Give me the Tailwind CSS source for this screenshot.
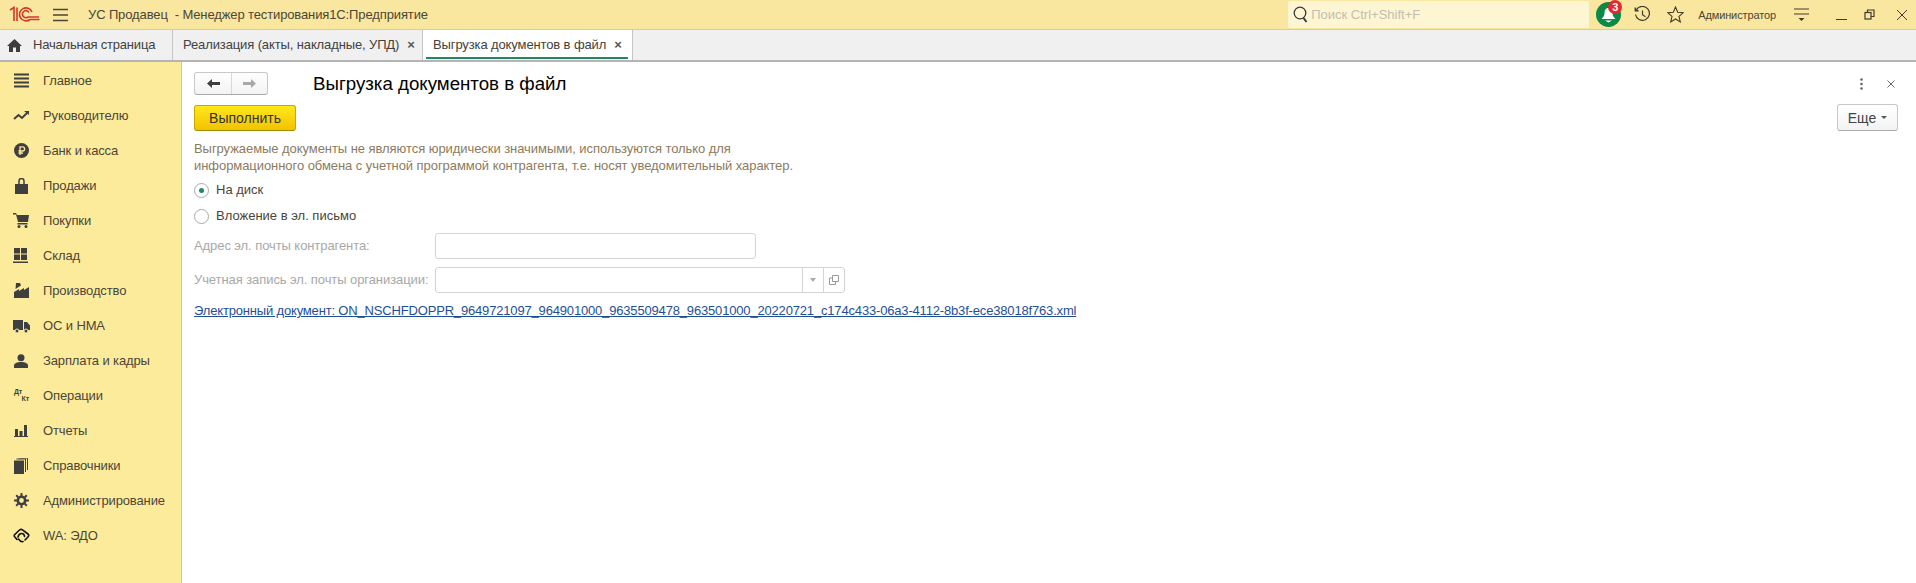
<!DOCTYPE html>
<html lang="ru">
<head>
  <meta charset="UTF-8" />
  <title>Выгрузка документов в файл</title>
  <script src="https://cdn.jsdelivr.net/npm/@tailwindcss/browser@4"></script>
</head>
<body class="h-screen overflow-hidden flex flex-col bg-white text-[13px] leading-[16px] tracking-[-0.12px] text-[#4b4636] font-['Liberation_Sans',Arial,sans-serif]">

  <!-- Title bar -->
  <header class="h-[30px] shrink-0 flex items-center pr-[8px] bg-[#fae79f] border-b border-[#e3cd7c]">
    <svg class="ml-[9px] w-[31px] h-[17px]" viewBox="0 0 31 17" fill="none" stroke="#d2382c" stroke-width="1.600">
      <path d="M1 4l4-2.500V15"/>
      <path d="M8 1.500V15"/>
      <path d="M23 6a6.500 6.500 0 1 0 -2 7.500h9.500"/>
      <path d="M20 6.500a3.500 3.500 0 1 0 -1 4.500h11"/>
    </svg>
    <svg class="ml-[13px] w-[15px] h-[14px]" viewBox="0 0 15 14" stroke="#4b4636" stroke-width="1.300"><path d="M0 1.500h15M0 7h15M0 12.500h15"/></svg>
    <span class="ml-[20px] whitespace-pre text-[13px]">УС Продавец  - Менеджер тестирования1С:Предприятие</span>

    <div class="ml-auto w-[301px] h-[27px] bg-[#fef6d2] rounded-[2px] flex items-center pl-[5px]">
      <svg class="w-[15px] h-[17px]" viewBox="0 0 15 17" fill="none" stroke="#3a3a3a" stroke-width="1.300"><circle cx="7" cy="7" r="5.800"/><path d="M10.500 12l3 4" stroke-width="2"/></svg>
      <span class="ml-[3px] tracking-normal text-[#c2bfae]">Поиск Ctrl+Shift+F</span>
    </div>

    <div class="relative ml-[7px] w-[25px] h-[25px] rounded-full bg-[#0b8a45] flex items-center justify-center">
      <svg class="w-[17px] h-[17px] mt-[1px]" viewBox="0 0 17 17" fill="#fff"><path d="M8.500 1c3 0 4 2.500 4 5 0 3 1.500 4.500 3 6H1.500c1.500-1.500 3-3 3-6 0-2.500 1-5 4-5z"/><path d="M5 13.500h7l-3.500 2z"/></svg>
      <span class="absolute -top-[2px] left-[12px] w-[14px] h-[14px] rounded-full bg-[#e8262c] text-white text-[11px] font-bold leading-[14px] text-center">3</span>
    </div>

    <svg class="ml-[13px] w-[17px] h-[17px]" viewBox="0 0 17 17" fill="none" stroke="#3f3b2c" stroke-width="1.200"><path d="M2.600 3.500A7 7 0 1 1 1.500 8.500"/><path d="M1.200 1.500v3.500h3.500" fill="#3f3b2c"/><path d="M8.500 4.500v4.300l3 2"/></svg>
    <svg class="ml-[16px] w-[17px] h-[17px]" viewBox="0 0 17 17" fill="none" stroke="#3f3b2c" stroke-width="1.100"><path d="M8.500 1l2.200 5.200 5.600.5-4.300 3.700 1.300 5.500-4.800-2.900-4.800 2.900 1.300-5.500L.7 6.700l5.600-.5z"/></svg>
    <span class="ml-[14px] text-[11px]">Администратор</span>
    <svg class="ml-[18px] w-[15px] h-[15px]" viewBox="0 0 15 15" stroke="#3f3b2c" stroke-width="1.100" fill="#3f3b2c"><path d="M0 2h15M0 7h15"/><path d="M4.500 11h6l-3 3z" stroke="none"/></svg>
    <span class="ml-[27px] w-[11px] h-[1px] mt-[9px] bg-[#3f3b2c]"></span>
    <svg class="ml-[17px] w-[11px] h-[11px]" viewBox="0 0 11 11" fill="none" stroke="#3f3b2c" stroke-width="1.200"><rect x="1" y="3.500" width="6" height="6.500"/><path d="M3.500 3.500V1H10v6.500H7"/></svg>
    <svg class="ml-[21px] w-[12px] h-[12px]" viewBox="0 0 12 12" stroke="#3f3b2c"><path d="M1 1l10 10M11 1L1 11"/></svg>
  </header>

  <!-- Tabs -->
  <nav class="h-[32px] shrink-0 flex bg-[#f0f0f0] border-b-2 border-[#b4b4b4] text-[13px] text-[#44423b]">
    <div class="w-[173px] flex items-center border-r border-[#c4c4c4] pl-[7px]">
      <svg class="w-[15px] h-[13px]" viewBox="0 0 15 13" fill="#3d3d3d"><path d="M7.500 0L15 7h-2v6H9V8.500H6V13H2V7H0z"/></svg>
      <span class="ml-[11px] tracking-[-0.2px]">Начальная страница</span>
    </div>
    <div class="w-[250px] flex items-center border-r border-[#c4c4c4] pl-[10px]">
      <span>Реализация (акты, накладные, УПД)</span>
      <span class="ml-[8px] text-[#555] font-bold">×</span>
    </div>
    <div class="relative w-[210px] flex items-center border-r border-[#c4c4c4] pl-[10px] bg-white">
      <span>Выгрузка документов в файл</span>
      <span class="ml-[8px] text-[#555] font-bold">×</span>
      <span class="absolute left-[3px] right-[4px] bottom-[1px] h-[2px] bg-[#1f8a5f]"></span>
    </div>
  </nav>

  <div class="flex-1 flex min-h-0">
    <!-- Section panel -->
    <aside class="w-[182px] shrink-0 bg-[#fdeb9c] border-r border-[#d9c77f] pt-[1px]">
      <a class="h-[35px] flex items-center">
        <svg class="ml-[14px] w-[15px] h-[15px]" viewBox="0 0 15 15" stroke="#3f3f3f" stroke-width="2"><path d="M0 1.500h15M0 5.500h15M0 9.500h15M0 13.500h15"/></svg>
        <span class="ml-[14px]">Главное</span>
      </a>
      <a class="h-[35px] flex items-center">
        <svg class="ml-[13px] w-[17px] h-[15px]" viewBox="0 0 17 15" fill="none" stroke="#3f3f3f" stroke-width="2"><path d="M1 11l4.500-4 3.500 3 5-5"/><path d="M11 3h5v4" fill="#3f3f3f" stroke="none"/></svg>
        <span class="ml-[13px]">Руководителю</span>
      </a>
      <a class="h-[35px] flex items-center">
        <svg class="ml-[14px] w-[15px] h-[15px]" viewBox="0 0 15 15"><circle cx="7.500" cy="7.500" r="7.500" fill="#3f3f3f"/><path d="M6 12V3.800h2.500a2 2 0 0 1 0 4.200H4.500M4.500 10h4.500" fill="none" stroke="#fdeb9c" stroke-width="1.300"/></svg>
        <span class="ml-[14px]">Банк и касса</span>
      </a>
      <a class="h-[35px] flex items-center">
        <svg class="ml-[15px] w-[13px] h-[16px]" viewBox="0 0 13 16"><path d="M0 6h13v10H0z" fill="#3f3f3f"/><path d="M4 8V3a2.500 2.500 0 0 1 5 0v5" fill="none" stroke="#3f3f3f" stroke-width="1.500"/></svg>
        <span class="ml-[15px]">Продажи</span>
      </a>
      <a class="h-[35px] flex items-center">
        <svg class="ml-[13px] w-[16px] h-[15px]" viewBox="0 0 16 15" fill="#3f3f3f"><path d="M0 0h3l1 2h12l-1 7H5L3 1.500H0z"/><path d="M4.500 10h10v1.500h-10z"/><circle cx="6" cy="13.500" r="1.500"/><circle cx="13" cy="13.500" r="1.500"/></svg>
        <span class="ml-[14px]">Покупки</span>
      </a>
      <a class="h-[35px] flex items-center">
        <svg class="ml-[13px] w-[15px] h-[15px]" viewBox="0 0 15 15" fill="#3f3f3f"><path d="M1 0h6v5.500H1zM8 0h6v5.500H8zM1 6.500h6V12H1zM8 6.500h6V12H8zM0 13.500h15V15H0z"/></svg>
        <span class="ml-[15px]">Склад</span>
      </a>
      <a class="h-[35px] flex items-center">
        <svg class="ml-[14px] w-[15px] h-[15px]" viewBox="0 0 15 15" fill="#3f3f3f"><path d="M0 15V9l5-3v2l5-3v2l5-3v11z"/><path d="M2 0h4l1 2.500L1.500 6z"/></svg>
        <span class="ml-[14px]">Производство</span>
      </a>
      <a class="h-[35px] flex items-center">
        <svg class="ml-[13px] w-[17px] h-[14px]" viewBox="0 0 17 14" fill="#3f3f3f"><path d="M0 1h10v10H0zM11 3h3l3 3.500V11h-6z"/><circle cx="4" cy="12" r="2" stroke="#fdeb9c"/><circle cx="13" cy="12" r="2" stroke="#fdeb9c"/></svg>
        <span class="ml-[13px]">ОС и НМА</span>
      </a>
      <a class="h-[35px] flex items-center">
        <svg class="ml-[14px] w-[14px] h-[14px]" viewBox="0 0 14 14" fill="#3f3f3f"><circle cx="7" cy="3.800" r="3.500"/><path d="M0 14v-2.500c0-2 3-3.500 7-3.500s7 1.500 7 3.500V14z"/></svg>
        <span class="ml-[15px]">Зарплата и кадры</span>
      </a>
      <a class="h-[35px] flex items-center">
        <span class="ml-[14px] w-[15px] h-[15px] flex flex-col text-[7px] leading-[7px] font-bold text-[#3f3f3f]"><span>Дт</span><span class="self-end">Кт</span></span>
        <span class="ml-[14px]">Операции</span>
      </a>
      <a class="h-[35px] flex items-center">
        <svg class="ml-[14px] w-[14px] h-[12px]" viewBox="0 0 14 12" fill="#3f3f3f"><path d="M1 4h3v7H1zM5.500 6h3v5h-3zM10 0h3v11h-3zM0 11h14v1H0z"/></svg>
        <span class="ml-[15px]">Отчеты</span>
      </a>
      <a class="h-[35px] flex items-center">
        <svg class="ml-[14px] w-[14px] h-[16px]" viewBox="0 0 14 16"><path d="M0 2.500h10V16H0z" fill="#3f3f3f"/><path d="M2.500 1h9v13M5 0h8.500v12" fill="none" stroke="#3f3f3f" stroke-width="1"/></svg>
        <span class="ml-[15px]">Справочники</span>
      </a>
      <a class="h-[35px] flex items-center">
        <svg class="ml-[14px] w-[15px] h-[15px]" viewBox="0 0 15 15" fill="none" stroke="#3f3f3f"><circle cx="7.500" cy="7.500" r="3.700" stroke-width="2.600"/><path d="M7.500 0v3M7.500 12v3M0 7.500h3M12 7.500h3M2.200 2.200l2 2M10.800 10.800l2 2M12.800 2.200l-2 2M4.200 10.800l-2 2" stroke-width="2"/></svg>
        <span class="ml-[14px]">Администрирование</span>
      </a>
      <a class="h-[35px] flex items-center">
        <svg class="ml-[13px] w-[17px] h-[15px]" viewBox="0 0 17 15" fill="none" stroke="#111" stroke-width="1.600" stroke-linecap="round"><path d="M4 11.500L1.500 8.500Q.8 7.500 1.800 6.500L6.500 2Q8 .8 9.500 1.800L15 6Q16.300 7 15.300 8.500L12 12"/><path d="M5 9Q6 5.500 8.500 5.500Q11.500 5.500 11.500 8.500"/><path d="M5.500 11Q8 14.500 10 13.500"/></svg>
        <span class="ml-[13px]">WA: ЭДО</span>
      </a>
    </aside>

    <!-- Form -->
    <main class="flex-1 min-w-0 pl-[12px] pr-[18px]">
      <div class="flex items-center pt-[10px]">
        <div class="w-[74px] h-[23px] flex border border-[#c8c8c8] border-b-[#aaa] rounded-[3px] bg-gradient-to-b from-white to-[#f3f3f3]">
          <span class="w-[37px] flex items-center justify-center border-r border-[#d8d8d8]">
            <svg class="w-[13px] h-[9px]" viewBox="0 0 13 9" fill="#3f3f3f"><path d="M0 4.500L5 0v3h8v3H5v3z"/></svg>
          </span>
          <span class="flex-1 flex items-center justify-center">
            <svg class="w-[13px] h-[9px]" viewBox="0 0 13 9" fill="#a8a8a8"><path d="M13 4.500L8 0v3H0v3h8v3z"/></svg>
          </span>
        </div>
        <h1 class="ml-[45px] text-[18.7px] leading-[23px] tracking-normal text-black">Выгрузка документов в файл</h1>
        <svg class="ml-auto mr-[24px] w-[3px] h-[12px]" viewBox="0 0 3 12" fill="#666"><circle cx="1.500" cy="1.500" r="1.300"/><circle cx="1.500" cy="6" r="1.300"/><circle cx="1.500" cy="10.500" r="1.300"/></svg>
        <svg class="mr-[3px] w-[8px] h-[8px]" viewBox="0 0 8 8" stroke="#666"><path d="M.5.500l7 7M7.500.500l-7 7"/></svg>
      </div>

      <div class="flex justify-between items-start mt-[10px]">
        <button class="w-[102px] h-[26px] rounded-[3px] border border-[#c9a800] border-b-[#a88c00] bg-gradient-to-b from-[#ffe81a] to-[#f2c200] text-[14px] tracking-normal text-[#333]">Выполнить</button>
        <button class="w-[61px] h-[27px] -mt-[1px] rounded-[3px] border border-[#c8c8c8] border-b-[#aaa] bg-gradient-to-b from-white to-[#f3f3f3] text-[14px] tracking-normal text-[#444] flex items-center justify-center gap-[5px]">Еще<span class="border-x-[3px] border-t-[3px] border-x-transparent border-t-[#555]"></span></button>
      </div>

      <p class="mt-[9px] text-[13px] leading-[17px] tracking-[-0.06px] text-[#8c7b5e]">Выгружаемые документы не являются юридически значимыми, используются только для<br />информационного обмена с учетной программой контрагента, т.е. носят уведомительный характер.</p>

      <label class="mt-[7px] h-[18px] flex items-center tracking-normal">
        <span class="w-[15px] h-[15px] rounded-full border border-[#a9a9a9] flex items-center justify-center"><span class="w-[5px] h-[5px] rounded-full bg-[#1f8a5f]"></span></span>
        <span class="ml-[7px]">На диск</span>
      </label>
      <label class="mt-[8px] h-[18px] flex items-center tracking-normal">
        <span class="w-[15px] h-[15px] rounded-full border border-[#a9a9a9]"></span>
        <span class="ml-[7px]">Вложение в эл. письмо</span>
      </label>

      <div class="mt-[8px] h-[26px] flex items-center tracking-[-0.08px] text-[#a8a8a8]">
        <span class="w-[241px]">Адрес эл. почты контрагента:</span>
        <div class="w-[321px] h-full border border-[#d4d4d4] rounded-[3px]"></div>
      </div>
      <div class="mt-[8px] h-[26px] flex items-center tracking-[-0.08px] text-[#a8a8a8]">
        <span class="w-[241px]">Учетная запись эл. почты организации:</span>
        <div class="w-[410px] h-full flex justify-end border border-[#d4d4d4] rounded-[3px]">
          <span class="w-[21px] flex items-center justify-center border-l border-[#d4d4d4]"><span class="border-x-[3px] border-t-[4px] border-x-transparent border-t-[#aaa]"></span></span>
          <span class="w-[21px] flex items-center justify-center border-l border-[#d4d4d4]">
            <svg class="w-[10px] h-[10px]" viewBox="0 0 10 10" fill="none" stroke="#999"><path d="M3.500 6.500V.5h6v6zM3.500 3H.5v6.500h6V6.500"/></svg>
          </span>
        </div>
      </div>

      <a class="block mt-[10px] text-[13px] leading-[16px] tracking-[-0.17px] text-[#1f4f94] underline">Электронный документ: ON_NSCHFDOPPR_9649721097_964901000_9635509478_963501000_20220721_c174c433-06a3-4112-8b3f-ece38018f763.xml</a>
    </main>
  </div>
</body>
</html>
